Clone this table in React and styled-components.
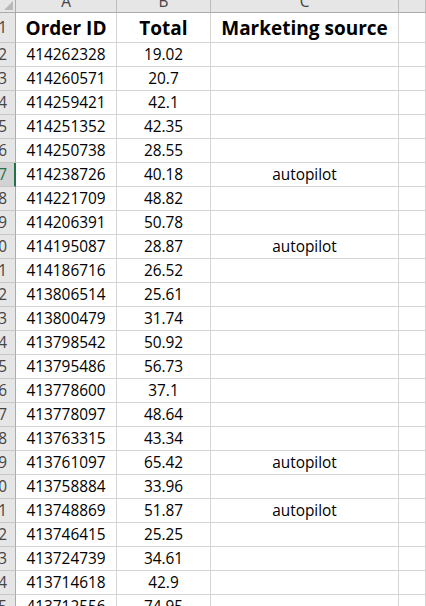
import React from "react";
import styled, { createGlobalStyle, css } from "styled-components";

const GlobalStyle = createGlobalStyle`
  html, body { margin: 0; padding: 0; background: #ffffff; overflow: hidden; }
  * { box-sizing: border-box; }
`;

const FONT = `"Open Sans", "Noto Sans", "Liberation Sans", sans-serif`;
const COLS = "16px 101px 94px 188px 1fr";

const Sheet = styled.div`
  width: 426px;
  height: 606px;
  overflow: hidden;
  font-family: ${FONT};
  background: #ffffff;
`;

const Row = styled.div`
  display: grid;
  grid-template-columns: ${COLS};
  height: ${(p) => p.$h}px;
`;

const Corner = styled.div`
  position: relative;
  background: #e6e6e6;
  border-right: 1px solid #ababab;
  border-bottom: 1px solid #ababab;
  overflow: hidden;
`;

const CornerTriangle = styled.div`
  position: absolute;
  right: 2px;
  bottom: 2px;
  width: 0;
  height: 0;
  border-left: 9px solid transparent;
  border-bottom: 9px solid #b9b9b9;
`;

const ColHead = styled.div`
  background: #e6e6e6;
  border-right: 1px solid #bcbcbc;
  border-bottom: 1px solid #ababab;
  display: flex;
  align-items: flex-end;
  justify-content: center;
  padding-bottom: 3px;
  overflow: hidden;
  font-size: 15.4px;
  line-height: 1;
  color: #444444;
`;

const RowHead = styled.div`
  background: #e6e6e6;
  border-right: 1px solid #ababab;
  border-bottom: 1px solid #c6c6c6;
  display: flex;
  align-items: center;
  justify-content: flex-end;
  padding-right: 8px;
  overflow: hidden;
  white-space: nowrap;
  font-size: 15.4px;
  color: #444444;
  ${(p) =>
    p.$active &&
    css`
      background: #d2d2d2;
      color: #217346;
      border-right: 2px solid #217346;
      padding-right: 7px;
    `}
`;

const Cell = styled.div`
  border-right: 1px solid #d4d4d4;
  border-bottom: 1px solid #d4d4d4;
  display: flex;
  align-items: center;
  justify-content: center;
  white-space: nowrap;
  overflow: hidden;
  color: #000000;
  font-size: ${(p) => (p.$bold ? "19px" : "15.4px")};
  font-weight: ${(p) => (p.$bold ? 700 : 400)};
  padding-top: ${(p) => (p.$bold ? "1px" : "0")};
`;

const rows = [
  ["414262328", "19.02", ""],
  ["414260571", "20.7", ""],
  ["414259421", "42.1", ""],
  ["414251352", "42.35", ""],
  ["414250738", "28.55", ""],
  ["414238726", "40.18", "autopilot"],
  ["414221709", "48.82", ""],
  ["414206391", "50.78", ""],
  ["414195087", "28.87", "autopilot"],
  ["414186716", "26.52", ""],
  ["413806514", "25.61", ""],
  ["413800479", "31.74", ""],
  ["413798542", "50.92", ""],
  ["413795486", "56.73", ""],
  ["413778600", "37.1", ""],
  ["413778097", "48.64", ""],
  ["413763315", "43.34", ""],
  ["413761097", "65.42", "autopilot"],
  ["413758884", "33.96", ""],
  ["413748869", "51.87", "autopilot"],
  ["413746415", "25.25", ""],
  ["413724739", "34.61", ""],
  ["413714618", "42.9", ""],
  ["413712556", "74.95", ""],
  ["413709102", "22.4", ""],
];

export default function App() {
  return (
    <>
      <GlobalStyle />
      <Sheet>
        <Row $h={13}>
          <Corner>
            <CornerTriangle />
          </Corner>
          <ColHead>A</ColHead>
          <ColHead>B</ColHead>
          <ColHead>C</ColHead>
          <ColHead />
        </Row>
        <Row $h={30}>
          <RowHead>1</RowHead>
          <Cell $bold>Order ID</Cell>
          <Cell $bold>Total</Cell>
          <Cell $bold>Marketing source</Cell>
          <Cell />
        </Row>
        {rows.map(([id, total, source], i) => {
          const n = i + 2;
          return (
            <Row $h={24} key={n}>
              <RowHead $active={n === 7}>{n}</RowHead>
              <Cell>{id}</Cell>
              <Cell>{total}</Cell>
              <Cell>{source}</Cell>
              <Cell />
            </Row>
          );
        })}
      </Sheet>
    </>
  );
}
